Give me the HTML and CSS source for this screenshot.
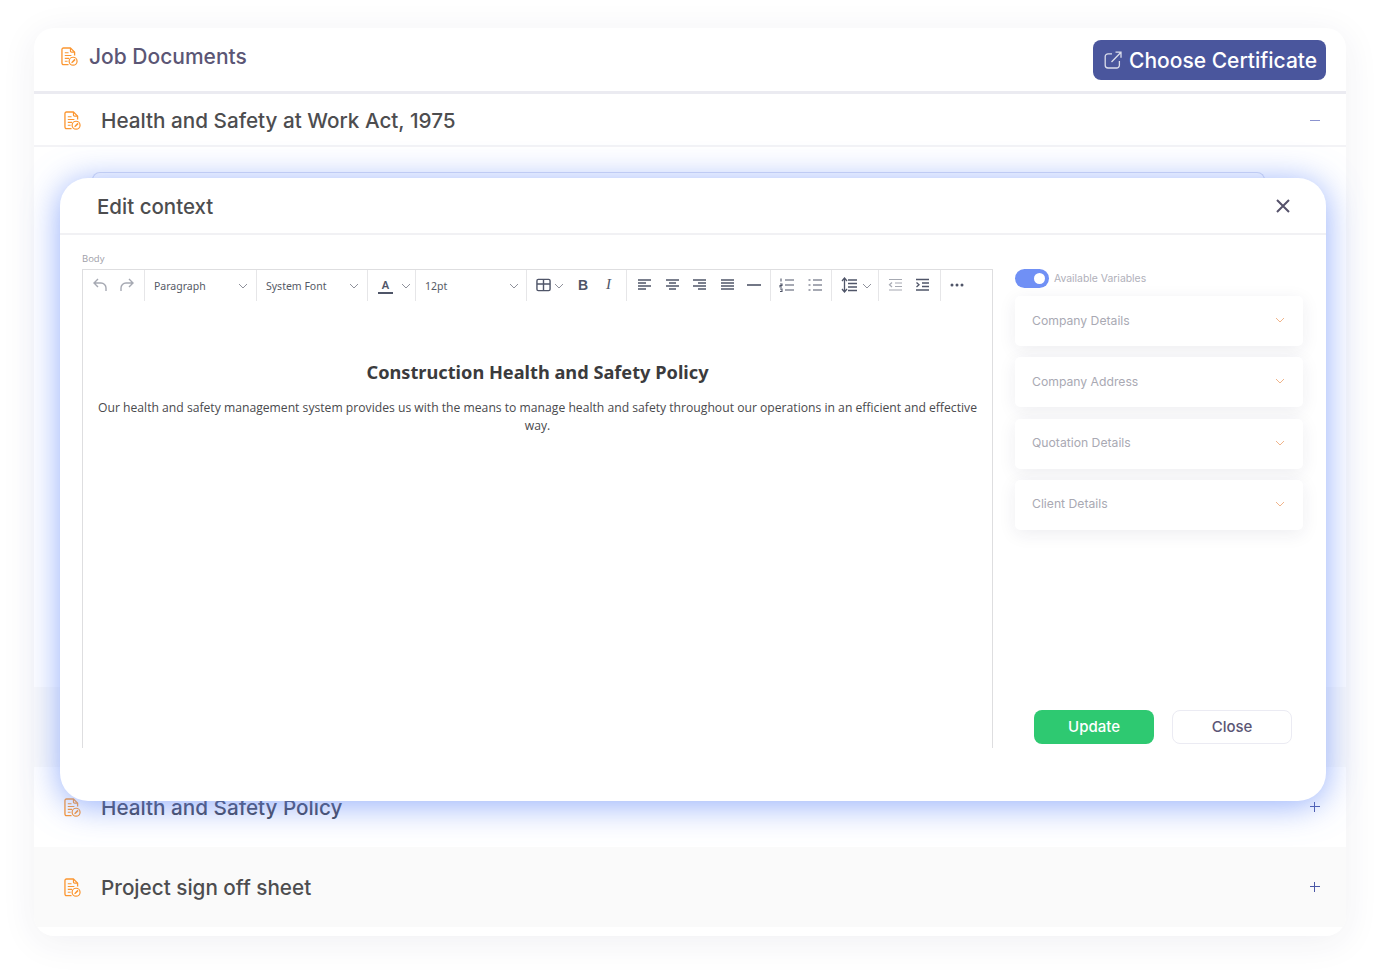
FILE: index.html
```html
<!DOCTYPE html>
<html lang="en">
<head>
<meta charset="utf-8">
<title>Job Documents</title>
<link rel="stylesheet" href="styles.css">
</head>
<body>
<svg class="defs" width="0" height="0" aria-hidden="true">
  <symbol id="doc" viewBox="0 0 18 20">
    <path d="M8 18.600H2.600A1.600 1.600 0 0 1 1 17V2.600A1.600 1.600 0 0 1 2.600 1H10l4.400 4.400V9" fill="none" stroke="currentColor" stroke-width="1.400" stroke-linejoin="round"/>
    <path d="M10 1v3.200a1.200 1.200 0 0 0 1.200 1.200h3.200M4 6h4M4 9h7M4 12h4.500M4 15h3" fill="none" stroke="currentColor" stroke-width="1.200"/>
    <circle cx="12.800" cy="15" r="4.200" fill="#fff" stroke="currentColor" stroke-width="1.300"/>
    <path d="M10.800 17.200l.5-1.700 3-3 1.200 1.200-3 3z" fill="currentColor"/>
  </symbol>
  <symbol id="chev" viewBox="0 0 10 6"><path d="M1 1l4 4 4-4" fill="none" stroke="currentColor" stroke-width="1"/></symbol>
</svg>
<main class="page">
  <section class="card">
    <header class="card-head">
      <div class="head-title"><svg class="doc"><use href="#doc"/></svg><h1>Job Documents</h1></div>
      <button class="choose">
        <svg class="ext" viewBox="0 0 18 18" fill="none" stroke="currentColor" stroke-width="1.300"><path d="M8 2.800H4A2.800 2.800 0 0 0 1.200 5.600v8.600A2.800 2.800 0 0 0 4 17h8.600a2.800 2.800 0 0 0 2.800-2.800V10M7.500 11 17 1.200M11.500 1.200H17v5.500"/></svg>
        Choose Certificate
      </button>
    </header>
    <div class="row row-open"><svg class="doc"><use href="#doc"/></svg><h2>Health and Safety at Work Act, 1975</h2><span class="minus"></span></div>
    <div class="expanded"><div class="inner-box"></div></div>
    <div class="row row-grey"></div>
    <div class="row row-tall"><svg class="doc"><use href="#doc"/></svg><h2 class="blue">Health and Safety Policy</h2><span class="plus"></span></div>
    <div class="row row-tall row-grey"><svg class="doc"><use href="#doc"/></svg><h2>Project sign off sheet</h2><span class="plus"></span></div>
  </section>

  <section class="modal">
    <header class="modal-head">
      <h3>Edit context</h3>
      <svg class="x" viewBox="0 0 16 16" stroke="currentColor" stroke-width="2"><path d="M2 2l12 12M14 2 2 14"/></svg>
    </header>
    <div class="modal-body">
      <div class="editor-col">
        <label class="body-label">Body</label>
        <div class="editor">
          <div class="toolbar">
            <div class="grp g-undo">
              <svg class="ti faded" viewBox="0 0 16 16" fill="none" stroke="currentColor" stroke-width="1.400"><path d="M6 2 2 6l4 4M2 6h7a5 5 0 0 1 5 5v3"/></svg>
              <svg class="ti faded" viewBox="0 0 16 16" fill="none" stroke="currentColor" stroke-width="1.400"><path d="m10 2 4 4-4 4M14 6H7a5 5 0 0 0-5 5v3"/></svg>
            </div>
            <div class="grp g-sel"><span>Paragraph</span><svg class="tc"><use href="#chev"/></svg></div>
            <div class="grp g-sel"><span>System Font</span><svg class="tc"><use href="#chev"/></svg></div>
            <div class="grp g-color"><span class="color-a">A</span><svg class="tc"><use href="#chev"/></svg></div>
            <div class="grp g-sel"><span>12pt</span><svg class="tc"><use href="#chev"/></svg></div>
            <div class="grp g-table">
              <svg class="ti tbl" viewBox="0 0 16 14" fill="none" stroke="currentColor" stroke-width="1.500"><rect x="1" y="1" width="14" height="12" rx="1.500"/><path d="M1 6h14M8 1v12"/></svg>
              <svg class="tc tc-near"><use href="#chev"/></svg>
              <span class="bold-b">B</span><span class="ital-i">I</span>
            </div>
            <div class="grp g-align">
              <svg class="ti" viewBox="0 0 16 16" stroke="currentColor" stroke-width="1.300"><path d="M2 3h13M2 6h8M2 9h13M2 12h8"/></svg>
              <svg class="ti" viewBox="0 0 16 16" stroke="currentColor" stroke-width="1.300"><path d="M2 3h13M5 6h7M2 9h13M5 12h7"/></svg>
              <svg class="ti" viewBox="0 0 16 16" stroke="currentColor" stroke-width="1.300"><path d="M2 3h13M7 6h8M2 9h13M7 12h8"/></svg>
              <svg class="ti" viewBox="0 0 16 16" stroke="currentColor" stroke-width="1.300"><path d="M2 3h13M2 6h13M2 9h13M2 12h13"/></svg>
              <svg class="ti" viewBox="0 0 16 16" stroke="currentColor" stroke-width="1.600"><path d="M1 8h14"/></svg>
            </div>
            <div class="grp g-lists">
              <svg class="ti" viewBox="0 0 16 16" fill="none" stroke="currentColor" stroke-width="1.100"><path d="M6 3h9M6 8h9M6 13h9M2 1.500v3M1 7h2v1.500H1V10h2M1 12h2v2.500H1"/></svg>
              <svg class="ti" viewBox="0 0 16 16" stroke="currentColor" stroke-width="1.200"><path d="M6 3h9M6 8h9M6 13h9M1.500 3h2M1.500 8h2M1.500 13h2"/></svg>
            </div>
            <div class="grp g-line">
              <svg class="ti" viewBox="0 0 16 16" fill="none" stroke="currentColor" stroke-width="1.300"><path d="M7 3h9M7 6.500h9M7 10h9M7 13.500h9M3.500 1v14M1 4l2.500-3L6 4M1 12l2.500 3L6 12"/></svg>
              <svg class="tc tc-near"><use href="#chev"/></svg>
            </div>
            <div class="grp g-indent">
              <svg class="ti faded" viewBox="0 0 16 16" fill="none" stroke="currentColor" stroke-width="1.200"><path d="M2 2.500h13M8 6h7M8 9.500h7M2 13h13M5 5.500 2.500 7.800 5 10"/></svg>
              <svg class="ti" viewBox="0 0 16 16" fill="none" stroke="currentColor" stroke-width="1.300"><path d="M2 2.500h13M8 6h7M8 9.500h7M2 13h13M2.500 5.500 5 7.800 2.500 10"/></svg>
            </div>
            <div class="grp g-more"><svg class="ti" viewBox="0 0 16 16" fill="currentColor"><circle cx="3" cy="8" r="1.500"/><circle cx="8" cy="8" r="1.500"/><circle cx="13" cy="8" r="1.500"/></svg></div>
          </div>
          <article class="doc-text">
            <h4>Construction Health and Safety Policy</h4>
            <p>Our health and safety management system provides us with the means to manage health and safety throughout our operations in an efficient and effective way.</p>
          </article>
        </div>
      </div>
      <aside class="vars">
        <div class="toggle-row"><span class="toggle"></span><span>Available Variables</span></div>
        <div class="var-list">
          <div class="var"><span>Company Details</span><svg class="vc"><use href="#chev"/></svg></div>
          <div class="var"><span>Company Address</span><svg class="vc"><use href="#chev"/></svg></div>
          <div class="var"><span>Quotation Details</span><svg class="vc"><use href="#chev"/></svg></div>
          <div class="var"><span>Client Details</span><svg class="vc"><use href="#chev"/></svg></div>
        </div>
        <div class="actions">
          <button class="update">Update</button>
          <button class="close">Close</button>
        </div>
      </aside>
    </div>
  </section>
</main>
</body>
</html>
```
FILE: styles.css
```css
* { box-sizing: border-box; }
html, body { margin: 0; padding: 0; background: #fff; }
body { font-family: "Inter", "Liberation Sans", sans-serif; }
.defs { position: absolute; }
.page { position: relative; width: 1380px; height: 977px; padding: 28px 34px 41px; overflow: hidden; }
.card { height: 908px; background: #fff; border-radius: 20px; box-shadow: 0 6px 36px rgba(40, 40, 80, .07); overflow: hidden; display: flex; flex-direction: column; padding-bottom: 9px; }
h1, h2, h3, h4, p { margin: 0; font-weight: 500; }
.card-head { height: 66px; flex: none; display: flex; align-items: flex-start; justify-content: space-between; padding: 12px 20px 0 27px; border-bottom: 3px solid #ebebf1; }
.head-title { display: flex; align-items: center; gap: 11px; height: 33px; }
.doc { width: 17px; height: 19px; color: #fb9631; flex: none; }
h1 { font-size: 21px; color: #5b5675; }
.choose { width: 233px; height: 40px; display: flex; align-items: center; gap: 7px; padding: 0 0 0 11px; background: #4a569d; color: #fff; border: 0; border-radius: 8px; font: 500 21px "Inter", sans-serif; white-space: nowrap; }
.ext { width: 18px; height: 18px; opacity: .8; flex: none; }
.row { display: flex; align-items: center; flex: none; padding: 0 26px 0 30px; background: #fff; height: 80px; }
.row h2 { font-size: 20.700px; color: #4d4d4f; margin-left: 20px; flex: 1; }
.row h2.blue { color: #3f4250; }
.row-open { height: 53px; border-bottom: 2px solid #f3f3f6; padding-top: 2px; }
.row-grey { background: #fafafa; }
.row-tall { height: 80px; }
.minus { width: 10px; height: 1px; background: #8b93cf; }
.plus { width: 10px; height: 10px; background: linear-gradient(#4a57a6, #4a57a6) center / 10px 1.300px no-repeat, linear-gradient(#4a57a6, #4a57a6) center / 1.300px 10px no-repeat; }
.expanded { flex: 1; padding: 25px 81px 0 58px; }
.inner-box { height: 100%; border: 1px solid #d6dcf2; border-bottom: 0; border-radius: 8px 8px 0 0; }
.modal { position: absolute; left: 60px; top: 178px; width: 1266px; height: 623px; background: #fff; border-radius: 28px; box-shadow: 0 4px 34px rgba(110, 145, 250, .75); display: flex; flex-direction: column; }
.modal-head { height: 57px; flex: none; display: flex; align-items: center; justify-content: space-between; padding: 2px 35px 0 37px; border-bottom: 2px solid #f1f1f4; }
h3 { font-size: 20.500px; color: #4d4d4f; }
.x { width: 16px; height: 16px; color: #56526b; margin-top: -2px; }
.modal-body { flex: 1; display: flex; padding: 17px 22px 53px; }
.editor-col { width: 911px; flex: none; display: flex; flex-direction: column; }
.body-label { font: 400 9.500px "Open Sans", sans-serif; color: #a0a0a8; height: 17px; line-height: 13px; }
.editor { flex: 1; border: 1px solid #dedee0; border-width: 1px 1px 0; }
.toolbar { height: 31px; display: flex; color: #4f5568; }
.grp { height: 31px; display: flex; align-items: center; flex: none; border-right: 1px solid #e6e6e8; }
.grp .ti { margin-top: -2px; }
.g-undo { width: 62px; padding-left: 9px; gap: 11px; }
.g-sel { width: 112px; padding: 0 8px 0 9px; justify-content: space-between; font: 400 10.500px "Noto Sans", sans-serif; color: #555a66; }
.g-sel + .g-sel { width: 111px; }
.g-color { width: 48px; padding: 0 4px 0 10px; justify-content: space-between; }
.g-sel:nth-child(5) { width: 111px; padding-right: 7px; }
.color-a { font: 600 11px "Noto Sans", sans-serif; line-height: 14px; width: 15px; text-align: center; border-bottom: 2px solid #4f5568; display: block; }
.g-table { width: 100px; padding-left: 9px; }
.tbl { width: 15px !important; height: 14px !important; }
.bold-b { font: 700 14px "Liberation Sans", sans-serif; margin-left: 14px; width: 27px; margin-top: -2px; }
.ital-i { font: italic 400 15px "Liberation Serif", serif; width: 20px; margin-left: 1px; margin-top: -2px; }
.g-align { width: 144px; padding-left: 9px; gap: 11.500px; }
.g-lists { width: 61px; padding-left: 8px; gap: 11.500px; }
.g-line { width: 47px; padding-left: 9px; gap: 2px; }
.g-indent { width: 62px; padding-left: 8px; gap: 11px; }
.g-more { width: auto; border: 0; padding-left: 8px; }
.ti { width: 16px; height: 16px; flex: none; }
.faded { opacity: .5; }
.tc { width: 10px; height: 6px; color: #8f919b; flex: none; }
.tc-near { margin-left: 3px; }
.doc-text { padding: 0 14px; text-align: center; color: #3b3b3d; }
.doc-text h4 { font: 700 18.200px "Noto Sans", sans-serif; margin-top: 58px; line-height: 26px; }
.doc-text p { font: 400 12.170px/18px "Open Sans", sans-serif; margin-top: 14px; color: #4a4a4d; }
.vars { flex: 1; display: flex; flex-direction: column; margin-left: 22px; font-family: "Inter", sans-serif; }
.toggle-row { height: 19px; margin-top: 17px; display: flex; align-items: center; gap: 5px; font-size: 10.400px; color: #b0b0ba; }
.toggle { position: relative; width: 34px; height: 19px; border-radius: 10px; background: #7090f5; }
.toggle::after { content: ""; position: absolute; right: 4px; top: 4px; width: 11px; height: 11px; border-radius: 50%; background: #fff; }
.var-list { display: flex; flex-direction: column; gap: 11.330px; margin-top: 8px; width: 288px; }
.var { height: 50px; background: #fff; border-radius: 5px; box-shadow: 0 4px 18px rgba(40, 40, 80, .08); display: flex; align-items: center; justify-content: space-between; padding: 0 18px 2px 17px; font-size: 12.200px; color: #a9a9b3; }
.vc { width: 10px; height: 6px; color: #f0b48a; }
.actions { margin-top: auto; display: flex; gap: 18px; padding-left: 19px; margin-bottom: 4px; }
.actions button { width: 120px; height: 34px; padding: 0 0 2px; border-radius: 8px; font: 500 15px "Inter", sans-serif; }
.update { background: #2ec971; color: #fff; border: 0; }
.close { background: #fff; color: #5b5675; border: 1px solid #ebebf3; }
```
